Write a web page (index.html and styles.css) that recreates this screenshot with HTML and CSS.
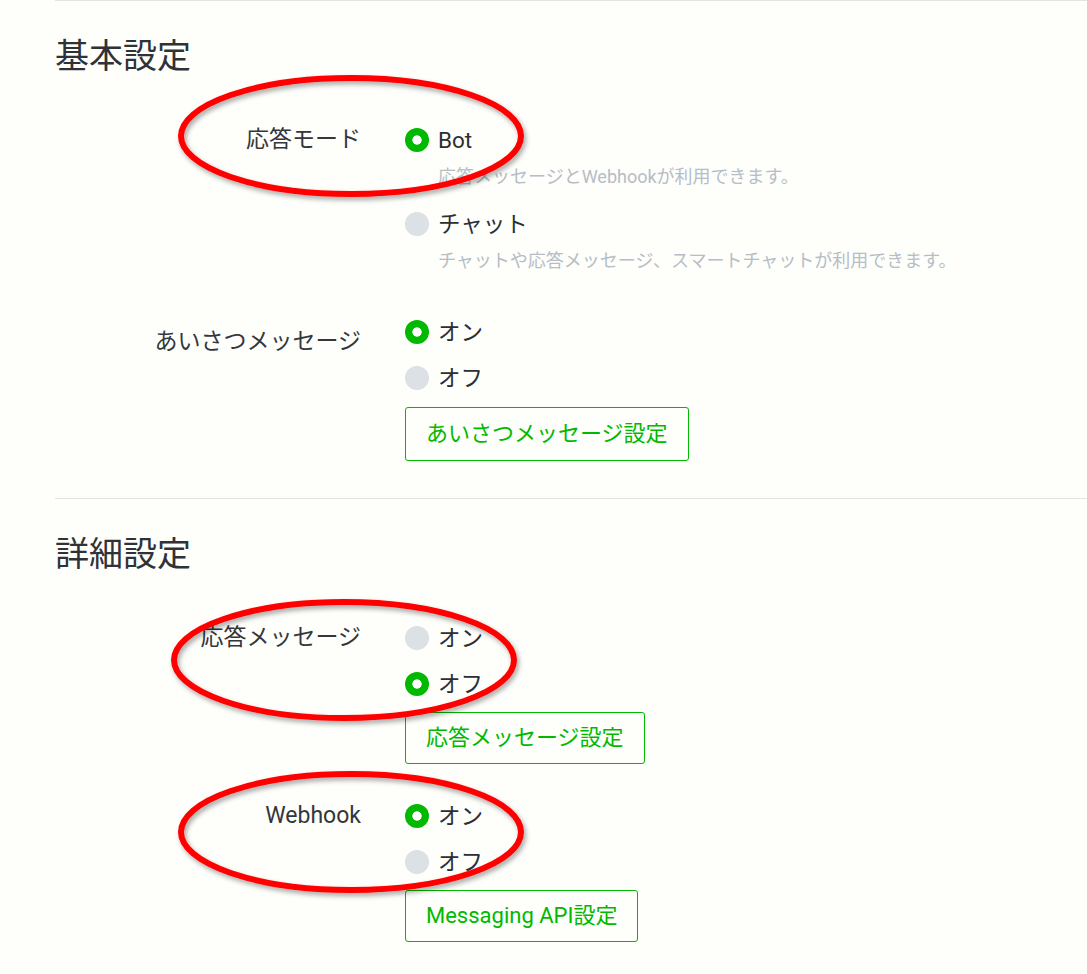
FILE: index.html
```html
<!DOCTYPE html>
<html lang="ja">
<head>
<meta charset="utf-8">
<title>応答設定</title>
<link rel="stylesheet" href="styles.css">
</head>
<body>
<main class="page">
  <section class="section">
    <h2 class="section-title">基本設定</h2>
    <div class="form-list">
      <div class="form-row">
        <div class="form-label">応答モード</div>
        <div class="form-field">
          <div class="radio is-checked"><span class="radio-mark"></span><span class="radio-text">Bot</span></div>
          <p class="radio-desc">応答メッセージとWebhookが利用できます。</p>
          <div class="radio"><span class="radio-mark"></span><span class="radio-text">チャット</span></div>
          <p class="radio-desc">チャットや応答メッセージ、スマートチャットが利用できます。</p>
        </div>
      </div>
      <div class="form-row">
        <div class="form-label form-label--low">あいさつメッセージ</div>
        <div class="form-field">
          <div class="radio is-checked"><span class="radio-mark"></span><span class="radio-text">オン</span></div>
          <div class="radio"><span class="radio-mark"></span><span class="radio-text">オフ</span></div>
          <button class="btn-outline" type="button">あいさつメッセージ設定</button>
        </div>
      </div>
    </div>
  </section>

  <section class="section">
    <h2 class="section-title">詳細設定</h2>
    <div class="form-list">
      <div class="form-row">
        <div class="form-label">応答メッセージ</div>
        <div class="form-field">
          <div class="radio"><span class="radio-mark"></span><span class="radio-text">オン</span></div>
          <div class="radio is-checked"><span class="radio-mark"></span><span class="radio-text">オフ</span></div>
          <button class="btn-outline btn-outline--tight" type="button">応答メッセージ設定</button>
        </div>
      </div>
      <div class="form-row">
        <div class="form-label">Webhook</div>
        <div class="form-field">
          <div class="radio is-checked"><span class="radio-mark"></span><span class="radio-text">オン</span></div>
          <div class="radio"><span class="radio-mark"></span><span class="radio-text">オフ</span></div>
          <button class="btn-outline btn-outline--tight" type="button">Messaging API設定</button>
        </div>
      </div>
    </div>
  </section>
</main>

<svg class="annotations" width="1087" height="974" viewBox="0 0 1087 974" aria-hidden="true">
  <defs>
    <filter id="mark-shadow" x="-10%" y="-20%" width="120%" height="140%">
      <feDropShadow dx="2" dy="3" stdDeviation="2.5" flood-color="#000" flood-opacity="0.35"/>
    </filter>
  </defs>
  <g fill="none" stroke="#ff0000" stroke-width="6" filter="url(#mark-shadow)">
    <ellipse cx="351" cy="136" rx="170" ry="58"/>
    <ellipse cx="344" cy="660" rx="170" ry="58"/>
    <ellipse cx="351" cy="832" rx="170" ry="58"/>
  </g>
</svg>
</body>
</html>
```

FILE: styles.css
```css
* {
  box-sizing: border-box;
}

html, body {
  margin: 0;
  padding: 0;
  background: #fefefb;
}

body {
  position: relative;
  width: 1087px;
  height: 974px;
  overflow: hidden;
  font-family: Roboto, "Noto Sans CJK JP", sans-serif;
  color: #2e3237;
}

.page {
  margin-left: 55px;
}

.section {
  border-top: 1px solid #e3e3e1;
  padding-top: 35px;
  padding-bottom: 37px;
}

.section-title {
  margin: 0 0 49px;
  font-size: 34px;
  line-height: 40px;
  font-weight: 400;
  color: #2f3338;
}

.form-list {
  display: flex;
  flex-direction: column;
  gap: 37px;
}

.form-row {
  display: grid;
  grid-template-columns: 306px auto;
  column-gap: 44px;
  align-items: start;
}

.form-label {
  text-align: right;
  font-size: 23px;
  line-height: 30px;
  color: #33373c;
}

.form-label--low {
  padding-top: 10px;
}

.form-field {
  display: flex;
  flex-direction: column;
  align-items: flex-start;
}

.radio {
  display: flex;
  align-items: center;
  gap: 9px;
  height: 30px;
  font-size: 22.5px;
  line-height: 30px;
  color: #2b2f34;
}

.radio + .radio {
  margin-top: 16px;
}

.radio-desc + .radio {
  margin-top: 21px;
}

.radio-mark {
  width: 24px;
  height: 24px;
  border-radius: 50%;
  background: #dce1e6;
  flex: none;
}

.is-checked .radio-mark {
  background: radial-gradient(circle, #ffffff 0 4.3px, #00b900 5px);
}

.radio-desc {
  margin: 11px 0 0;
  padding-left: 33px;
  font-size: 18px;
  line-height: 22px;
  color: #b5bdc6;
}

.radio-desc:last-child {
  margin-bottom: 8px;
}

.btn-outline {
  margin-top: 14px;
  padding: 11px 20px;
  border: 1px solid #00b900;
  border-radius: 3px;
  background: transparent;
  font-family: Roboto, "Noto Sans CJK JP", sans-serif;
  font-size: 22px;
  line-height: 30px;
  color: #00b900;
  cursor: pointer;
}

.btn-outline--tight {
  margin-top: 13px;
  padding-top: 10px;
  padding-bottom: 10px;
}

.annotations {
  position: absolute;
  top: 0;
  left: 0;
  pointer-events: none;
}
```
